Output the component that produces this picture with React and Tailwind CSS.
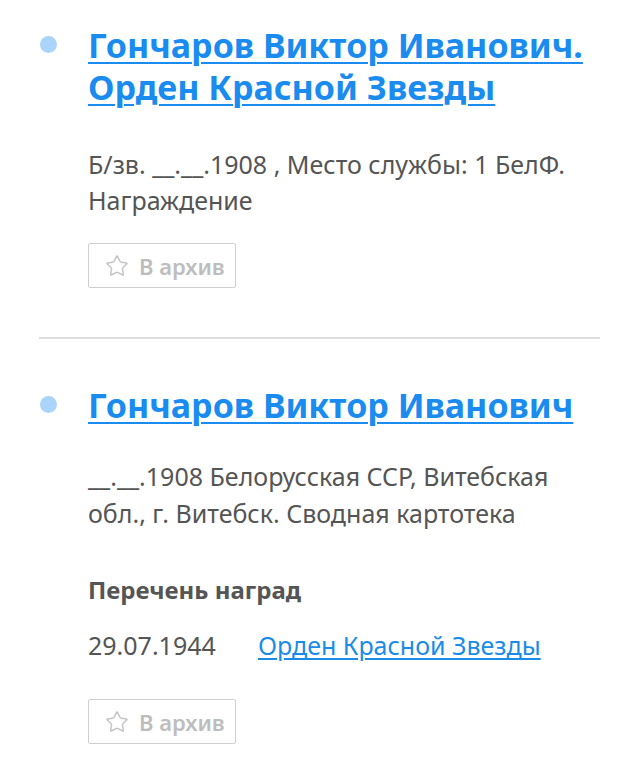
import React from "react";
import { Star } from "lucide-react";

const font = { fontFamily: '"Noto Sans", "Open Sans", sans-serif' };

function ArchiveButton() {
  return (
    <button className="flex h-[45px] w-[148px] items-center gap-[10px] rounded-[2px] border border-[#cfcfcf] bg-white pl-[16px] text-[22px] font-semibold text-[#bdbdbd]">
      <Star size={24} strokeWidth={1.5} className="text-[#c4c4c4]" />
      <span className="leading-none">В архив</span>
    </button>
  );
}

function Bullet() {
  return <span className="mt-[12px] ml-[1px] block h-[17px] w-[17px] shrink-0 rounded-full bg-[#aad4fa]" />;
}

export default function App() {
  return (
    <div className="min-h-[773px] w-[639px] bg-white text-[#555555]" style={font}>
      <div className="px-[39px]">
        <div className="flex gap-[31px] pt-[24px] pb-[49px]">
          <Bullet />
          <div className="flex flex-col">
            <a href="#" className="text-[34px] font-bold leading-[42px] text-[#1a8cf0] underline decoration-[2px] underline-offset-[4px]">
              Гончаров Виктор Иванович. Орден Красной Звезды
            </a>
            <p className="mt-[38px] text-[25px] leading-[36px]">
              Б/зв. __.__.1908 , Место службы: 1 БелФ. Награждение
            </p>
            <div className="mt-[25px]">
              <ArchiveButton />
            </div>
          </div>
        </div>
        <div className="h-[2px] bg-[#dddddd]" />
        <div className="flex gap-[31px] pt-[45px] pb-[20px]">
          <Bullet />
          <div className="flex flex-col">
            <a href="#" className="text-[34px] font-bold leading-[42px] text-[#1a8cf0] underline decoration-[2px] underline-offset-[4px]">
              Гончаров Виктор Иванович
            </a>
            <p className="mt-[32px] text-[25px] leading-[37px]">
              __.__.1908 Белорусская ССР, Витебская обл., г. Витебск. Сводная картотека
            </p>
            <p className="mt-[40px] text-[24px] font-bold leading-[36px]">Перечень наград</p>
            <div className="mt-[19px] flex text-[25px] leading-[36px]">
              <span className="w-[170px]">29.07.1944</span>
              <a href="#" className="text-[#1a8ce8] underline underline-offset-[3px]">Орден Красной Звезды</a>
            </div>
            <div className="mt-[36px]">
              <ArchiveButton />
            </div>
          </div>
        </div>
      </div>
    </div>
  );
}
